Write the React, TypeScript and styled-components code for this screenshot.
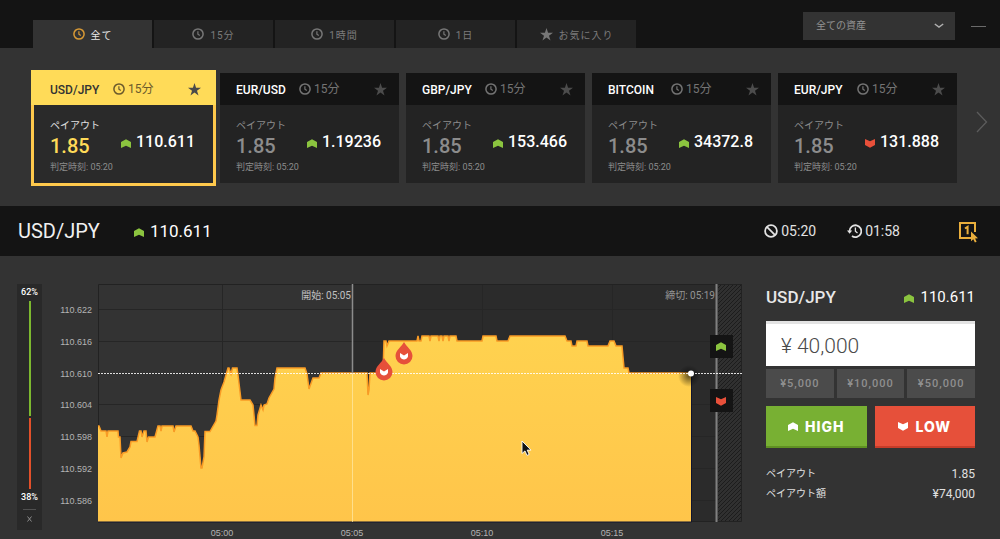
import React from 'react';
import styled, { createGlobalStyle, css } from 'styled-components';

const GlobalStyle = createGlobalStyle`
  * { box-sizing: border-box; }
  body {
    margin: 0;
    background: #333333;
    color: #ffffff;
    font-family: Roboto, "Noto Sans CJK JP", sans-serif;
    font-size: 14px;
  }
  button, input, select { font: inherit; color: inherit; border: 0; border-radius: 0; margin: 0; }
  button { cursor: pointer; padding: 0; background: none; }
  h1, h2, h3, p, dl, dd, dt { margin: 0; font-weight: inherit; }
`;

/* ---------- icons ---------- */

const ClockIcon = ({ size = 12 }: { size?: number }) => (
  <svg width={size} height={size} viewBox="0 0 12 12" fill="none" stroke="currentColor" aria-hidden="true">
    <circle cx="6" cy="6" r="5.1" strokeWidth="1.5" />
    <path d="M5.9 3.2V6.2L7.8 7.6" strokeWidth="1.2" />
  </svg>
);

const StarIcon = ({ size = 13 }: { size?: number }) => (
  <svg width={size} height={size} viewBox="0 0 24 24" fill="currentColor" aria-hidden="true">
    <path d="M12 0l2.9 8.7H24l-7.4 5.5L19.4 23 12 17.6 4.6 23l2.8-8.8L0 8.700h9.100z" />
  </svg>
);

const GREEN = '#8bc43f';
const RED = '#e8503a';

const arrowUp = 'M0 3L5 0.300L10 3V9L5 6.800L0 9Z';
const arrowDown = 'M0 0L5 2.200L10 0V6L5 8.700L0 6Z';

const Arrow = ({ dir, color }: { dir: 'up' | 'down'; color?: string }) => (
  <svg width="10" height="9" viewBox="0 0 10 9" aria-hidden="true">
    <path d={dir === 'up' ? arrowUp : arrowDown} fill={color ?? (dir === 'up' ? GREEN : RED)} />
  </svg>
);

const BanIcon = () => (
  <svg width="14" height="14" viewBox="0 0 14 14" fill="none" stroke="currentColor" strokeWidth="1.800" aria-hidden="true">
    <circle cx="7" cy="7" r="5.900" />
    <path d="M2.900 2.900L11.100 11.100" />
  </svg>
);

const HistoryIcon = () => (
  <svg width="15" height="14" viewBox="0 0 15 14" fill="none" stroke="currentColor" aria-hidden="true">
    <path d="M2.500 7.200A5.900 5.900 0 1 1 5 12" strokeWidth="1.800" />
    <path d="M0 6.500H5.200L2.600 9.800Z" fill="currentColor" stroke="none" />
    <path d="M8.400 3.600V7.300L10.500 9" strokeWidth="1.300" />
  </svg>
);

const OneClickIcon = () => (
  <svg width="20" height="21" viewBox="0 0 20 21" fill="none" aria-hidden="true">
    <path d="M12 16H1V1H16V10" stroke="#e9ae3c" strokeWidth="2" />
    <path d="M6 6.500L8.600 4.800V12.200" stroke="#e9ae3c" strokeWidth="2" />
    <path d="M12 9.500V19.200L14.300 17.200L15.900 20.500L17.600 19.700L16.100 16.500L19 16.300Z" fill="#e9ae3c" />
  </svg>
);

/* ---------- top bar ---------- */

const TopBar = styled.header`
  display: flex;
  align-items: flex-end;
  height: 48px;
  padding-left: 33px;
  padding-right: 14px;
  background: #141414;
`;

const Tabs = styled.nav`
  display: flex;
  gap: 2px;
  margin-right: auto;
`;

const Tab = styled.button<{ $active?: boolean }>`
  display: flex;
  align-items: center;
  justify-content: center;
  gap: 6px;
  width: 119px;
  height: 28px;
  font-size: 10px;
  letter-spacing: 1px;
  color: ${p => (p.$active ? '#e8e8e8' : '#7c7c7c')};
  background: ${p => (p.$active ? '#333333' : '#232323')};
  svg { color: ${p => (p.$active ? '#d99a35' : '#777777')}; }
`;

const AssetPicker = styled.label`
  position: relative;
  align-self: flex-start;
  width: 152px;
  margin-top: 12px;
  margin-right: 16px;
  select {
    display: block;
    width: 100%;
    height: 28px;
    padding: 0 13px 2px;
    appearance: none;
    background: #333333;
    color: #929292;
    font-size: 10px;
  }
  svg { position: absolute; right: 11px; top: 11px; pointer-events: none; }
`;

const Minimise = styled.button`
  align-self: flex-start;
  width: 15px;
  height: 15px;
  margin-top: 19px;
  display: flex;
  align-items: center;
  &::before { content: ''; width: 100%; height: 1px; background: #6a6a6a; }
`;

/* ---------- asset cards ---------- */

const CardStrip = styled.section`
  display: flex;
  align-items: center;
  padding: 25px 12px 23px 34px;
`;

const Cards = styled.div`
  flex: 1;
  display: grid;
  grid-template-columns: repeat(5, 1fr);
  gap: 7px;
`;

const Card = styled.article<{ $active?: boolean }>`
  background: #232323;
  color: #8c8c8c;
  ${p => p.$active && css`
    background: #2a2a2a;
    color: #e0e0e0;
    box-shadow: 0 0 0 3px #ffc94c;
  `}
`;

const CardHead = styled.div<{ $active?: boolean }>`
  display: flex;
  align-items: center;
  height: 32px;
  padding: 0 12px 0 16px;
  background: ${p => (p.$active ? '#ffdb58' : '#141414')};
  ${p => p.$active && css`box-shadow: 0 0 0 3px #ffdb58; clip-path: inset(-3px -3px 0 -3px);`}
  h3 {
    width: 50px;
    padding-top: 1px;
    white-space: nowrap;
    font-size: 12px;
    font-weight: 500;
    color: ${p => (p.$active ? '#333333' : '#ffffff')};
  }
`;

const Term = styled.span<{ $active?: boolean }>`
  display: flex;
  align-items: center;
  gap: 3px;
  margin-left: 13px;
  font-size: 12px;
  line-height: 16px;
  color: ${p => (p.$active ? '#6b5a2c' : '#747474')};
`;

const Favourite = styled.button<{ $active?: boolean }>`
  display: flex;
  margin-left: auto;
  color: ${p => (p.$active ? '#4a4a4a' : '#4c4c4c')};
`;

const CardBody = styled.div`
  display: flex;
  align-items: center;
  justify-content: space-between;
  height: 78px;
  padding: 6px 18px 0 16px;
`;

const Caption = styled.p`
  font-size: 10px;
  line-height: 14px;
`;

const Rate = styled.p<{ $active?: boolean }>`
  font-size: 20px;
  line-height: 26px;
  font-weight: 500;
  color: ${p => (p.$active ? '#ffdb58' : '#8c8c8c')};
`;

const Judge = styled.p`
  width: 66px;
  font-size: 9px;
  line-height: 16px;
  color: #8c8c8c;
  white-space: nowrap;
`;

const Quote = styled.div<{ $size?: number; $gap?: number; $weight?: number }>`
  display: flex;
  align-items: center;
  gap: ${p => p.$gap ?? 6}px;
  font-size: ${p => p.$size ?? 15}px;
  line-height: 20px;
  font-weight: ${p => p.$weight ?? 500};
  color: #ffffff;
  svg { margin-top: 3px; }
`;

const CardQuote = styled(Quote)`
  margin-bottom: 11px;
`;

const Next = styled.button`
  display: flex;
  margin-left: 19px;
  margin-bottom: 12px;
`;

/* ---------- instrument bar ---------- */

const InstrumentBar = styled.section`
  display: flex;
  align-items: center;
  height: 50px;
  padding: 0 21px 0 18px;
  background: #141414;
  h1 { font-size: 20px; line-height: 24px; color: #f0f0f0; }
`;

const BarQuote = styled(Quote)`
  margin-left: 34px;
  margin-right: auto;
`;

const Clock = styled.span`
  display: flex;
  align-items: center;
  gap: 3px;
  margin-right: 31px;
  font-size: 14px;
  line-height: 20px;
  color: #e2e2e2;
`;

const OneClick = styled.button`
  display: flex;
  margin-left: 28px;
  margin-top: 2px;
`;

/* ---------- trading area ---------- */

const Trading = styled.main`
  display: flex;
  align-items: flex-start;
  padding: 28px 25px 0 17px;
`;

const Sentiment = styled.aside`
  display: flex;
  flex-direction: column;
  align-items: center;
  width: 25px;
  height: 246px;
  background: #292929;
  font-size: 9px;
  line-height: 16px;
  font-weight: 500;
`;

const Meter = styled.div`
  flex: 1;
  display: flex;
  flex-direction: column;
  gap: 2px;
  width: 2px;
  margin-top: 1px;
`;

const MeterPart = styled.div<{ $share: number; $color: string }>`
  flex: ${p => p.$share};
  background: ${p => p.$color};
`;

const CloseMeter = styled.button`
  display: flex;
  justify-content: center;
  width: 13px;
  height: 21px;
  padding-top: 6px;
  margin-top: 4px;
  border-top: 1px solid #505050;
`;

const ChartSvg = styled.svg`
  flex: 1;
  min-width: 0;
  display: block;
  margin-left: 14px;
  font-size: 9px;
`;

const Panel = styled.form`
  flex: none;
  width: 209px;
  margin-left: 22px;
`;

const PanelHead = styled.div`
  display: flex;
  align-items: center;
  justify-content: space-between;
  height: 26px;
  margin-bottom: 11px;
  h2 { font-size: 17px; line-height: 20px; font-weight: 500; color: #e8e8e8; }
`;

const Amount = styled.input`
  && {
    display: block;
    width: 100%;
    height: 45px;
    padding: 4px 15px 0;
    background: #ffffff;
    box-shadow: inset 0 3px 0 #e3e3e3;
    color: #4a4a4a;
    font-size: 21px;
    font-weight: 300;
  }
`;

const QuickRow = styled.div`
  display: grid;
  grid-template-columns: repeat(3, 1fr);
  gap: 3px;
  margin-top: 3px;
`;

const Quick = styled.button`
  height: 29px;
  background: #4b4b4b;
  color: #8f8f8f;
  font-size: 11px;
  font-weight: 500;
  letter-spacing: 1px;
`;

const OrderRow = styled.div`
  display: grid;
  grid-template-columns: 1fr 1fr;
  gap: 8px;
  margin-top: 8px;
`;

const Order = styled.button<{ $kind: 'high' | 'low' }>`
  display: flex;
  align-items: center;
  justify-content: center;
  gap: 7px;
  height: 42px;
  background: ${p => (p.$kind === 'high' ? '#78b033' : '#e6503a')};
  border-bottom: 2px solid ${p => (p.$kind === 'high' ? '#5f9122' : '#c63c29')};
  color: #ffffff;
  font-family: Inter, "Open Sans", sans-serif;
  font-size: 14px;
  font-weight: 800;
  letter-spacing: 1px;
`;

const Summary = styled.dl`
  display: grid;
  grid-template-columns: 1fr auto;
  margin-top: 16px;
  line-height: 20px;
  color: #e0e0e0;
  dt { font-size: 10px; }
  dd { font-size: 12px; text-align: right; }
`;

/* ---------- data ---------- */

const tabs = ['全て', '15分', '1時間', '1日', 'お気に入り'];

type Dir = 'up' | 'down';
const assets: { name: string; price: string; dir: Dir }[] = [
  { name: 'USD/JPY', price: '110.611', dir: 'up' },
  { name: 'EUR/USD', price: '1.19236', dir: 'up' },
  { name: 'GBP/JPY', price: '153.466', dir: 'up' },
  { name: 'BITCOIN', price: '34372.8', dir: 'up' },
  { name: 'EUR/JPY', price: '131.888', dir: 'down' },
];

const levels = ['110.622', '110.616', '110.610', '110.604', '110.598', '110.592', '110.586'];
const levelY = (i: number) => Math.round(25 + i * 31.75) + 0.5;

const times = [
  { x: 124, label: '05:00' },
  { x: 254, label: '05:05' },
  { x: 384, label: '05:10' },
  { x: 514, label: '05:15' },
];

const series =
  '0,142 1,142 3,147 8,147 9,153 10,147 20,147 20.5,153 22,153 23,174 25,169 29,168 32,163 33,157.500 39,157.500 ' +
  '41.5,147 43,147 44,153 46,147 48,147 49,158 50.5,153 57,153 60,142 62,142 63,147 64,142 75,142 76,148 78,142 ' +
  '93,142 95,147 97,147 100,153 101,161 103,184 104,184 106,173 107,147.500 112,147.500 118,137 119,131 121,116 ' +
  '123,106 126,98 128,91 130,84 131,84 133,90 134.5,84 139,84 140,91 143,116 152,116 155,121 157,141.500 159,141.500 ' +
  '160,131 163,121 165,126 166,121 169,120 171,114 176,105 177,94 179,84 207,84 209,90 211,105 215,94 221,94 223,89 ' +
  '269,89 270,111 271,106 272,89 285,89 286,57 288,57 289,62 291,57 319,57 320,52 321,57 323,57 324,52 331,52 332,57 333,52 ' +
  '340,52 341,57 342,52 344,52 345,57 346,52 350,52 351,57 352,52 358,52 359,57 384,57 385,52 398,52 399,57 410,57 412,52 467,52 ' +
  '469,57 473,57 474,62 478,62 479,57 489,57 490,62 510,62 512,57 516,57 518,62 524,62 526,84 530,84 531,89 593,89';

const Drop = ({ x, y }: { x: number; y: number }) => (
  <g transform={`translate(${x} ${y})`}>
    <path d="M0 -13C2.500 -8 8.500 -5 8.500 1A8.500 8.500 0 0 1 -8.500 1C-8.500 -5 -2.500 -8 0 -13Z" fill="#e6503a" />
    <path d="M-4 -2L0 0.500L4 -2V1.500C3.500 3.500 1.500 4.500 0 4.500S-3.500 3.500 -4 1.500Z" fill="#ffffff" />
  </g>
);

const Chart = () => (
  <ChartSvg viewBox="0 0 688 255" role="img" aria-label="USD/JPY">
    <defs>
      <linearGradient id="area" x1="0" y1="0" x2="0" y2="1">
        <stop offset="0" stopColor="#ffd24f" />
        <stop offset="1" stopColor="#ffc54a" />
      </linearGradient>
      <pattern id="hatch" width="4" height="4" patternUnits="userSpaceOnUse">
        <rect width="4" height="4" fill="#303030" />
        <path d="M-1 1L1 -1M0 4L4 0M3 5L5 3" stroke="#1c1c1c" strokeWidth="1" />
      </pattern>
      <radialGradient id="glow">
        <stop offset="0" stopColor="#000000" stopOpacity="0.600" />
        <stop offset="1" stopColor="#000000" stopOpacity="0" />
      </radialGradient>
    </defs>
    {levels.map((label, i) => (
      <text key={label} x="36" y={levelY(i) + 3} textAnchor="end" fill="#b4b4b4" fontFamily="Liberation Sans, sans-serif">{label}</text>
    ))}
    <g transform="translate(42 0)">
      <rect x="254" width="365" height="238" fill="#2b2b2b" />
      <rect x="620" width="24" height="238" fill="url(#hatch)" />
      <g stroke="#262626">
        {levels.map((label, i) => <path key={label} d={`M0 ${levelY(i)}H619`} />)}
        {times.map(t => <path key={t.label} d={`M${t.x + 0.5} 0V238`} />)}
        <path d="M644 0.500H0.500V238M643.500 0V237.500H593" fill="none" stroke="#222222" />
      </g>
      <polygon points={`0,238 ${series} 593,238`} fill="url(#area)" />
      <polyline points={series} fill="none" stroke="#f99b25" strokeWidth="1.500" />
      <path d="M593.500 90V238H0" fill="none" stroke="#10142e" />
      <path d="M254.500 0V89" stroke="#8c8c8c" strokeWidth="1.500" />
      <path d="M254.500 89V238" stroke="#ffe9a8" strokeOpacity="0.700" />
      <path d="M618.500 0V238" stroke="#808080" strokeWidth="2" />
      <circle cx="591" cy="92" r="11" fill="url(#glow)" />
      <path d="M0 89.500H644" stroke="#ffffff" strokeOpacity="0.850" strokeDasharray="2 1" />
      <circle cx="593" cy="89.500" r="3" fill="#ffffff" />
      <g fontFamily="Roboto, Noto Sans CJK JP, sans-serif" fontSize="10" textAnchor="end">
        <text x="253" y="15" fill="#c0c0c0">開始: 05:05</text>
        <text x="617" y="15" fill="#949494">締切: 05:19</text>
      </g>
      <rect x="612" y="51" width="23" height="23" fill="#141414" />
      <rect x="612" y="105" width="23" height="23" fill="#141414" />
      <path d={arrowUp} transform="translate(618 58)" fill={GREEN} />
      <path d={arrowDown} transform="translate(618 113)" fill={RED} />
      <Drop x={286} y={87} />
      <Drop x={306} y={71} />
      <path d="M424 157V169.500L427 166.900L429 171.400L431.200 170.400L429.200 166.100H433Z" fill="#111111" stroke="#ffffff" strokeWidth="0.900" />
      {times.map(t => (
        <text key={t.label} x={t.x} y="252" textAnchor="middle" fill="#b4b4b4" fontFamily="Liberation Sans, sans-serif">{t.label}</text>
      ))}
    </g>
  </ChartSvg>
);

export default function App() {
  return (
    <>
      <GlobalStyle />
      <TopBar>
        <Tabs>
          {tabs.map((label, i) => (
            <Tab key={label} type="button" $active={i === 0}>
              {i === tabs.length - 1 ? <StarIcon size={13} /> : <ClockIcon />}
              <span>{label}</span>
            </Tab>
          ))}
        </Tabs>
        <AssetPicker>
          <select aria-label="資産" defaultValue="all">
            <option value="all">全ての資産</option>
          </select>
          <svg width="10" height="6" viewBox="0 0 10 6" fill="none" stroke="#b0b0b0" strokeWidth="1.500" aria-hidden="true">
            <path d="M0.800 1L5 4L9.200 1" />
          </svg>
        </AssetPicker>
        <Minimise type="button" aria-label="最小化" />
      </TopBar>

      <CardStrip>
        <Cards>
          {assets.map((a, i) => {
            const active = i === 0;
            return (
              <Card key={a.name} $active={active}>
                <CardHead $active={active}>
                  <h3>{a.name}</h3>
                  <Term $active={active}><ClockIcon /> 15分</Term>
                  <Favourite type="button" aria-label="お気に入り" $active={active}><StarIcon /></Favourite>
                </CardHead>
                <CardBody>
                  <div>
                    <Caption>ペイアウト</Caption>
                    <Rate $active={active}>1.85</Rate>
                    <Judge>判定時刻: 05:20</Judge>
                  </div>
                  <CardQuote $size={16} $gap={5}><Arrow dir={a.dir} />{a.price}</CardQuote>
                </CardBody>
              </Card>
            );
          })}
        </Cards>
        <Next type="button" aria-label="次へ">
          <svg width="12" height="22" viewBox="0 0 12 22" fill="none" stroke="#5c5c5c" strokeWidth="1.300" aria-hidden="true">
            <path d="M1 1L10.500 11L1 21" />
          </svg>
        </Next>
      </CardStrip>

      <InstrumentBar>
        <h1>USD/JPY</h1>
        <BarQuote $size={17} $weight={400}><Arrow dir="up" />110.611</BarQuote>
        <Clock><BanIcon />05:20</Clock>
        <Clock><HistoryIcon />01:58</Clock>
        <OneClick type="button" aria-label="ワンクリック"><OneClickIcon /></OneClick>
      </InstrumentBar>

      <Trading>
        <Sentiment>
          <span>62%</span>
          <Meter>
            <MeterPart $share={62} $color="#7cb82f" />
            <MeterPart $share={38} $color="#e2502a" />
          </Meter>
          <span>38%</span>
          <CloseMeter type="button" aria-label="閉じる">
            <svg width="5" height="6" viewBox="0 0 5 6" stroke="#8c8c8c" aria-hidden="true">
              <path d="M0.500 0.500L4.500 5.500M4.500 0.500L0.500 5.500" />
            </svg>
          </CloseMeter>
        </Sentiment>
        <Chart />
        <Panel onSubmit={e => e.preventDefault()}>
          <PanelHead>
            <h2>USD/JPY</h2>
            <Quote $weight={400}><Arrow dir="up" />110.611</Quote>
          </PanelHead>
          <Amount aria-label="金額" defaultValue="¥ 40,000" />
          <QuickRow>
            {['¥5,000', '¥10,000', '¥50,000'].map(v => <Quick key={v} type="button">{v}</Quick>)}
          </QuickRow>
          <OrderRow>
            <Order type="button" $kind="high"><Arrow dir="up" color="#ffffff" />HIGH</Order>
            <Order type="button" $kind="low"><Arrow dir="down" color="#ffffff" />LOW</Order>
          </OrderRow>
          <Summary>
            <dt>ペイアウト</dt><dd>1.85</dd>
            <dt>ペイアウト額</dt><dd>¥74,000</dd>
          </Summary>
        </Panel>
      </Trading>
    </>
  );
}
